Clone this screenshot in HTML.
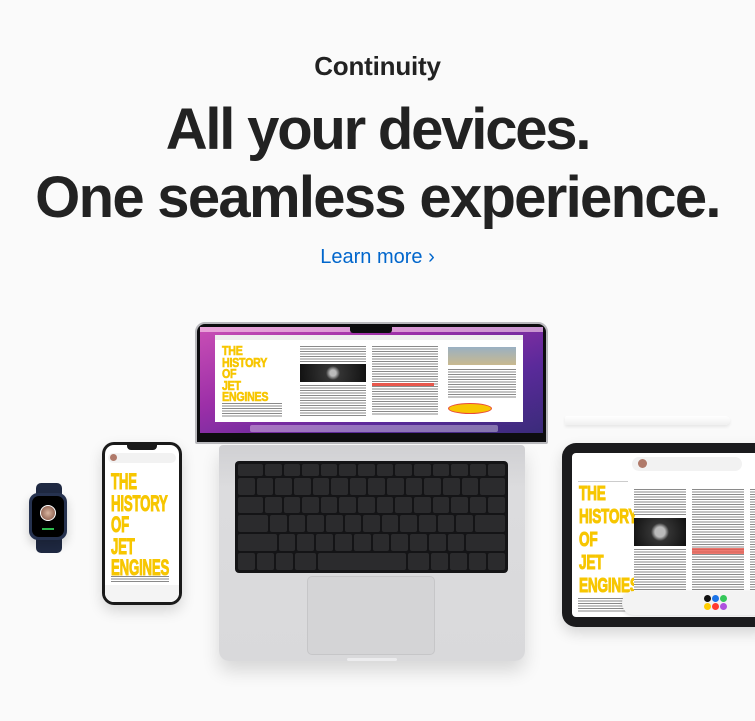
<!DOCTYPE html>
<html><head><meta charset="utf-8"><style>
*{margin:0;padding:0;box-sizing:border-box}
body{width:755px;height:721px;background:#fafafa;position:relative;overflow:hidden;font-family:"Liberation Sans",Arial,sans-serif;color:#1d1d1f}
.a{position:absolute}
.c{position:absolute;left:0;width:755px;text-align:center}
.lines{background:repeating-linear-gradient(#8a8a8a 0 1px,#fff 1px 2.5px)}
.y{color:#f7c600;font-weight:bold;transform-origin:0 0;white-space:nowrap;position:absolute;letter-spacing:-0.3px;-webkit-text-stroke:1px #f7c600}
.kb{display:flex;flex-direction:column;gap:2px;padding:3px}
.r{display:flex;gap:2px;flex:1}
.r span{flex:1;background:#2b2b2d;border-radius:2px}
</style></head><body>
<div class="c" style="top:51px;font-size:26px;font-weight:bold;letter-spacing:-0.2px;color:#222">Continuity</div>
<div class="c" style="top:96px;font-size:58px;font-weight:bold;letter-spacing:-2.2px;line-height:68px;color:#222">All your devices.</div>
<div class="c" style="top:164px;font-size:58px;font-weight:bold;letter-spacing:-1.7px;line-height:68px;color:#222">One seamless experience.</div>
<div class="c" style="top:246px;font-size:20px;color:#0066cc">Learn more ›</div>

<!-- pencil -->
<div class="a" style="left:565px;top:416px;width:165px;height:9px;background:linear-gradient(#fff,#f0f0f0);border-radius:2px 5px 5px 2px;box-shadow:0 2px 3px rgba(0,0,0,.08)"></div>

<!-- iPad -->
<div class="a" style="left:562px;top:443px;width:210px;height:184px;background:#1b1b1d;border-radius:14px;box-shadow:0 6px 14px rgba(0,0,0,.15)"></div>
<div class="a" style="left:572px;top:453px;width:200px;height:164px;background:#fff;border-radius:4px;overflow:hidden">
  <div class="a" style="left:60px;top:4px;width:110px;height:14px;background:#f2f2f2;border-radius:7px"></div>
  <div class="a" style="left:66px;top:6px;width:9px;height:9px;background:#b07a6a;border-radius:50%"></div>
  <div class="a" style="left:6px;top:28px;width:50px;height:1px;background:#ccc"></div>
  <div class="y" style="left:7px;top:30px;font-size:20px;line-height:23px;transform:scaleX(.68)">THE<br>HISTORY<br>OF<br>JET<br>ENGINES</div>
  <div class="a lines" style="left:6px;top:145px;width:52px;height:14px"></div>
  <div class="a lines" style="left:62px;top:36px;width:52px;height:26px"></div>
  <div class="a" style="left:62px;top:65px;width:52px;height:28px;background:radial-gradient(circle at 50% 50%,#bbb 0 5px,#333 9px,#111 100%)"></div>
  <div class="a lines" style="left:62px;top:96px;width:52px;height:62px"></div>
  <div class="a lines" style="left:120px;top:36px;width:52px;height:122px"></div>
  <div class="a" style="left:120px;top:95px;width:52px;height:6px;background:#e8574c;opacity:.8"></div>
  <div class="a lines" style="left:178px;top:36px;width:22px;height:122px"></div>
  <div class="a" style="left:50px;top:138px;width:150px;height:24px;background:#f3f3f3;border-radius:12px;box-shadow:0 1px 4px rgba(0,0,0,.15)"></div>
  <div class="a" style="left:132px;top:142px;width:7px;height:7px;background:#111;border-radius:50%;box-shadow:8px 0 #1a73e8,16px 0 #34c759,0 8px #ffcc00,8px 8px #ff3b30,16px 8px #af52de"></div>
</div>

<!-- Watch -->
<div class="a" style="left:36px;top:483px;width:26px;height:70px;background:#1f2942;border-radius:5px"></div>
<div class="a" style="left:29px;top:493px;width:38px;height:47px;background:#26324f;border-radius:9px;box-shadow:0 5px 10px rgba(0,0,0,.18)"></div>
<div class="a" style="left:32px;top:496px;width:32px;height:41px;background:#000;border-radius:7px"></div>
<div class="a" style="left:40px;top:505px;width:16px;height:16px;background:radial-gradient(#d9b5a0,#7a4a3a);border-radius:50%;border:1px solid #fff"></div>
<div class="a" style="left:42px;top:528px;width:12px;height:2px;background:#2dbb4e"></div>

<!-- iPhone -->
<div class="a" style="left:102px;top:442px;width:80px;height:163px;background:#1a1a1a;border-radius:12px;box-shadow:0 6px 14px rgba(0,0,0,.15)"></div>
<div class="a" style="left:105px;top:445px;width:74px;height:157px;background:#fff;border-radius:9px;overflow:hidden">
  <div class="a" style="left:22px;top:0;width:30px;height:5px;background:#1a1a1a;border-radius:0 0 4px 4px"></div>
  <div class="a" style="left:3px;top:8px;width:68px;height:10px;background:#f2f2f2;border-radius:5px"></div>
  <div class="a" style="left:5px;top:9px;width:7px;height:7px;background:#b07a6a;border-radius:50%"></div>
  <div class="y" style="left:6px;top:26px;font-size:22px;line-height:21.5px;transform:scaleX(.6)">THE<br>HISTORY<br>OF<br>JET<br>ENGINES</div>
  <div class="a lines" style="left:6px;top:131px;width:58px;height:7px"></div>
  <div class="a" style="left:0;top:140px;width:74px;height:17px;background:#f4f4f4"></div>
</div>

<!-- MacBook lid -->
<div class="a" style="left:195px;top:322px;width:353px;height:122px;background:#0d0d0f;border-radius:10px 10px 2px 2px;border:2px solid #b9b9bd"></div>
<div class="a" style="left:200px;top:327px;width:343px;height:106px;background:linear-gradient(160deg,#c94fb5 0%,#9c2fa8 35%,#5a2a9a 70%,#3a2b7a 100%);overflow:hidden">
  <div class="a" style="left:0;top:0;width:343px;height:5px;background:rgba(255,220,240,.6)"></div>
  <div class="a" style="left:150px;top:0;width:42px;height:6px;background:#0d0d0f;border-radius:0 0 3px 3px"></div>
  <div class="a" style="left:15px;top:8px;width:308px;height:87px;background:#fff"></div>
  <div class="a" style="left:15px;top:8px;width:308px;height:5px;background:#eee"></div>
  <div class="y" style="left:22px;top:18px;font-size:13px;line-height:11.5px;transform:scaleX(.82);-webkit-text-stroke:.6px #f7c600">THE<br>HISTORY<br>OF<br>JET<br>ENGINES</div>
  <div class="a lines" style="left:22px;top:76px;width:60px;height:14px"></div>
  <div class="a lines" style="left:100px;top:19px;width:66px;height:16px"></div>
  <div class="a" style="left:100px;top:37px;width:66px;height:18px;background:radial-gradient(circle,#bbb 0 3px,#333 7px,#111 100%)"></div>
  <div class="a lines" style="left:100px;top:58px;width:66px;height:32px"></div>
  <div class="a lines" style="left:172px;top:19px;width:66px;height:70px"></div>
  <div class="a" style="left:172px;top:56px;width:62px;height:3px;background:#e8574c"></div>
  <div class="a" style="left:248px;top:20px;width:68px;height:18px;background:linear-gradient(#9ab0c2,#c9b98f)"></div>
  <div class="a lines" style="left:248px;top:42px;width:68px;height:30px"></div>
  <div class="a" style="left:248px;top:76px;width:44px;height:11px;background:#f7c600;border:1px solid #e84a3a;border-radius:50%"></div>
  <div class="a" style="left:50px;top:98px;width:248px;height:7px;background:rgba(255,255,255,.35);border-radius:2px"></div>
</div>
<!-- base -->
<div class="a" style="left:219px;top:445px;width:306px;height:216px;background:linear-gradient(#d0d0d3,#dcdcde 20%,#d9d9db);border-radius:4px 4px 10px 10px;box-shadow:0 10px 18px rgba(0,0,0,.14)"></div>
<div class="a kb" style="left:235px;top:461px;width:273px;height:112px;background:#141416;border-radius:4px">
  <div class="r" style="flex:.7"><span style="flex:1.5"></span><span></span><span></span><span></span><span></span><span></span><span></span><span></span><span></span><span></span><span></span><span></span><span></span><span></span></div>
  <div class="r"><span></span><span></span><span></span><span></span><span></span><span></span><span></span><span></span><span></span><span></span><span></span><span></span><span></span><span style="flex:1.5"></span></div>
  <div class="r"><span style="flex:1.5"></span><span></span><span></span><span></span><span></span><span></span><span></span><span></span><span></span><span></span><span></span><span></span><span></span><span></span></div>
  <div class="r"><span style="flex:1.8"></span><span></span><span></span><span></span><span></span><span></span><span></span><span></span><span></span><span></span><span></span><span></span><span style="flex:1.8"></span></div>
  <div class="r"><span style="flex:2.3"></span><span></span><span></span><span></span><span></span><span></span><span></span><span></span><span></span><span></span><span></span><span style="flex:2.3"></span></div>
  <div class="r"><span></span><span></span><span></span><span style="flex:1.2"></span><span style="flex:5.2"></span><span style="flex:1.2"></span><span></span><span></span><span></span><span></span></div>
</div>
<div class="a" style="left:307px;top:576px;width:128px;height:79px;background:#d4d4d6;border:1px solid #c6c6c8;border-radius:5px"></div>
<div class="a" style="left:347px;top:658px;width:50px;height:3px;background:#ececee;border-radius:2px"></div>
</body></html>
